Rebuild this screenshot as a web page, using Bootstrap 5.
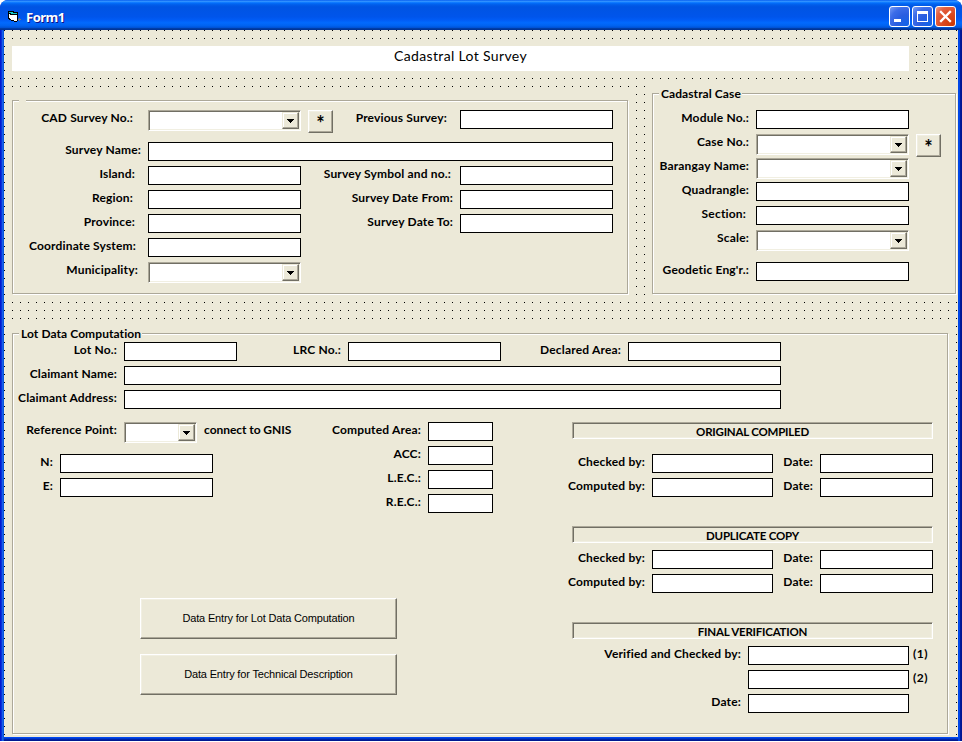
<!DOCTYPE html>
<html lang="en">
<head>
<meta charset="utf-8">
<title>Form1</title>
<link href="https://cdn.jsdelivr.net/npm/bootstrap@5.3.0/dist/css/bootstrap.min.css" rel="stylesheet">
<style>
:root{--face:#ece9d8;--shade:#aca899;--deep:#716f64;--lite:#f1efe2}
body{background:#fff;font:700 12px/16px Lato,sans-serif;color:#000;overflow:hidden}
.xp-window{width:962px;height:741px;border-radius:8px 8px 0 0;overflow:hidden;padding:0 4px 4px;
  background:linear-gradient(90deg,#0019cf 0,#0019cf 1px,#0831d9 1px,#0831d9 2px,#1660e8 2px,#1660e8 3px,#0855dd 3px,#0855dd 4px,transparent 4px,transparent 958px,#0046e6 958px,#0046e6 960px,#001da0 960px,#00138c 962px),
  linear-gradient(180deg,#0048f0 0,#0048f0 738px,#0041dc 738px,#0030c0 739px,#001890 740px)}
.xp-title{height:30px;margin:0 -4px;padding:0 6px 0 6px;
  background:linear-gradient(180deg,#0058ee 0,#3593ff 4%,#288eff 6%,#127dff 8%,#036ffc 10%,#0262ee 14%,#0057e5 20%,#0054e3 24%,#0055eb 56%,#005bf5 66%,#026afe 76%,#0062ef 86%,#0052d6 92%,#0040ab 94%,#003092 100%)}
.xp-caption{font:700 13px/16px "Noto Sans",sans-serif;letter-spacing:-.5px;color:#fff;text-shadow:1px 1px #0f1089;margin:3px 0 0 4px}
.xp-ico{margin:3px 0 0 1px}
.xp-btn{width:21px;height:21px;border:1px solid #fff;border-radius:3px;background:radial-gradient(circle at 85% 90%,#1463e8 0,#2a5de0 40%,#3c6ce8 70%,#7a9df5 100%)}
.xp-btn.xp-close{background:radial-gradient(circle at 90% 90%,#cc3a05 0,#da4a22 45%,#e46142 75%,#f0a08c 100%)}
.xp-btns{gap:2px;margin-top:2px}
.client{height:707px;padding:16px 0 0 8px;
  background:linear-gradient(90deg,#0000 1px,var(--face) 1px) 0 0/8px 8px,linear-gradient(#000 1px,var(--face) 1px) 0 0/8px 8px}
.banner{width:897px;height:25px;background:#fff;font:400 14px/20px Lato,sans-serif;letter-spacing:.35px;margin-bottom:15px}
.frame{position:relative;background:var(--face)}
.frame::before{content:"";position:absolute;inset:7px 1px 1px 0;border:1px solid var(--shade);box-shadow:inset 1px 1px #fff,1px 1px #fff}
.frame>*{position:relative}
.frame-a{width:617px;height:201px;margin-top:8px}
.frame-a::before{top:6px}
.frame-b{width:305px;height:209px;margin-left:23px}
.frame-c{width:937px;height:409px;margin-top:31px}
.cap{height:16px;margin-left:7px;padding:0 1px 0 2px;background:var(--face);width:max-content;min-width:7px;letter-spacing:.08px}
.tops{width:945px}
.ln{display:flex;height:24px;align-items:flex-start}
.ln.gap8{height:32px}
.lb{text-align:right;padding-right:7px;white-space:nowrap;flex:none;letter-spacing:.17px}
.r9{padding-right:9px}.r10{padding-right:10px}.r12{padding-right:12px}.r13{padding-right:13px}.r15{padding-right:15px}
.box{height:19px;min-height:0;padding:0 3px;border:1px solid #000;border-radius:0;background:#fff;font:inherit;flex:none}
.box:focus{box-shadow:none;border-color:#000}
.sunk{border:1px solid;border-color:var(--shade) #fff #fff var(--shade);box-shadow:inset 1px 1px var(--deep),inset -1px -1px var(--lite);flex:none}
.combo{height:21px;background:#fff;padding:1px;display:flex;justify-content:flex-end}
.raise{border:1px solid;border-color:#fff var(--deep) var(--deep) #fff;box-shadow:inset -1px -1px var(--shade),inset 1px 1px var(--lite);background:var(--face);border-radius:0;padding:0;color:#000}
.drop{width:17px;height:17px;border-color:var(--face) var(--deep) var(--deep) var(--face);box-shadow:inset -1px -1px var(--shade),inset 1px 1px #fff;display:block}
.drop svg{display:block;margin:6px 0 0 4px}
.star{width:25px;height:23px;margin-left:7px;font:700 20px/25px Lato,sans-serif;flex:none}
.cmd{display:block;width:257px;height:41px;padding-bottom:2px;font:400 11px/14px "Liberation Sans",sans-serif;letter-spacing:-.17px}
.cmds{margin:96px 0 0 128px}
.w153{width:153px}.w113{width:113px}.w465{width:465px}.w657{width:657px}.w73{width:73px}.w65{width:65px}.w121{width:121px}.w161{width:161px}
.l136{width:136px}.l159{width:159px}.l104{width:104px}.l112{width:112px}.l111{width:111px}.l127{width:127px}.l124{width:124px}.l100{width:100px}.l196{width:196px}.l48{width:48px}.l47{width:47px}
.l80{width:88px;text-align:left;padding:0 0 0 7px;letter-spacing:-.05px}
.colL{width:292px}.colM{width:248px}.colR{width:381px}
.bar{width:361px;height:17px;margin-left:20px;padding-top:1px;text-align:center;font-size:11.5px;letter-spacing:-.22px}
.bar2{margin-top:24px}
.num{margin-left:4px;letter-spacing:.5px}
.space15{margin-bottom:15px}.space7{margin-bottom:7px}
</style>
<script src="https://cdn.jsdelivr.net/npm/bootstrap@5.3.0/dist/js/bootstrap.bundle.min.js"></script>
</head>
<body>
<svg class="d-none"><symbol id="arr" viewBox="0 0 7 4"><path d="M0 0H7V1H6V2H5V3H4V4H3V3H2V2H1V1H0Z" shape-rendering="crispEdges"/></symbol></svg>
<main class="xp-window">
  <header class="xp-title d-flex align-items-center">
    <svg class="xp-ico" width="15" height="13" viewBox="0 0 15 13" shape-rendering="crispEdges"><path d="M1 1H7V2H11V11H10V12H7V11H4V10H2V9H1Z" fill="#000"/><path d="M2 2H6V3H10V4H4V3H2Z" fill="#1cc"/><path d="M2 4H3V8H2Z" fill="#fff"/><path d="M3 5H10V11H7V10H4V9H3Z" fill="#fff"/><path d="M12 8H13V9H14V10H13V11H12V10H11V9H12Z" fill="#777"/></svg>
    <div class="xp-caption">Form1</div>
    <div class="xp-btns d-flex ms-auto">
      <div class="xp-btn"><svg class="d-block" width="19" height="19"><path d="M4 12h7v3h-7z" fill="#fff"/></svg></div>
      <div class="xp-btn"><svg class="d-block" width="19" height="19"><path d="M4 4h11v11H4zM5 7v7h9V7z" fill="#fff" fill-rule="evenodd"/></svg></div>
      <div class="xp-btn xp-close"><svg class="d-block" width="19" height="19"><path d="M5 5l9 9M14 5l-9 9" stroke="#fff" stroke-width="2.3" stroke-linecap="square"/></svg></div>
    </div>
  </header>
  <div class="client">
    <div class="banner text-center">Cadastral Lot Survey</div>
    <div class="tops d-flex">
      <section class="frame frame-a">
        <div class="cap"></div>
        <div class="ln gap8"><label class="lb l136 r15">CAD Survey No.:</label><div class="sunk combo w153"><span class="raise drop"><svg width="7" height="4"><use href="#arr"/></svg></span></div><button class="btn raise star">*</button><label class="lb l127 r13">Previous Survey:</label><input class="form-control box w153"></div>
        <div class="ln"><label class="lb l136">Survey Name:</label><input class="form-control box w465"></div>
        <div class="ln"><label class="lb l136 r13">Island:</label><input class="form-control box w153"><label class="lb l159 r9">Survey Symbol and no.:</label><input class="form-control box w153"></div>
        <div class="ln"><label class="lb l136 r15">Region:</label><input class="form-control box w153"><label class="lb l159">Survey Date From:</label><input class="form-control box w153"></div>
        <div class="ln"><label class="lb l136 r13">Province:</label><input class="form-control box w153"><label class="lb l159">Survey Date To:</label><input class="form-control box w153"></div>
        <div class="ln"><label class="lb l136 r12">Coordinate System:</label><input class="form-control box w153"></div>
        <div class="ln"><label class="lb l136 r10">Municipality:</label><div class="sunk combo w153"><span class="raise drop"><svg width="7" height="4"><use href="#arr"/></svg></span></div></div>
      </section>
      <section class="frame frame-b">
        <div class="cap mb-2">Cadastral Case</div>
        <div class="ln"><label class="lb l104">Module No.:</label><input class="form-control box w153"></div>
        <div class="ln"><label class="lb l104">Case No.:</label><div class="sunk combo w153"><span class="raise drop"><svg width="7" height="4"><use href="#arr"/></svg></span></div><button class="btn raise star">*</button></div>
        <div class="ln"><label class="lb l104">Barangay Name:</label><div class="sunk combo w153"><span class="raise drop"><svg width="7" height="4"><use href="#arr"/></svg></span></div></div>
        <div class="ln"><label class="lb l104">Quadrangle:</label><input class="form-control box w153"></div>
        <div class="ln"><label class="lb l104 r10">Section:</label><input class="form-control box w153"></div>
        <div class="ln gap8"><label class="lb l104">Scale:</label><div class="sunk combo w153"><span class="raise drop"><svg width="7" height="4"><use href="#arr"/></svg></span></div></div>
        <div class="ln"><label class="lb l104">Geodetic Eng'r.:</label><input class="form-control box w153"></div>
      </section>
    </div>
    <section class="frame frame-c">
      <div class="cap">Lot Data Computation</div>
      <div class="ln"><label class="lb l112">Lot No.:</label><input class="form-control box w113"><label class="lb l111">LRC No.:</label><input class="form-control box w153"><label class="lb l127">Declared Area:</label><input class="form-control box w153"></div>
      <div class="ln"><label class="lb l112">Claimant Name:</label><input class="form-control box w657"></div>
      <div class="ln gap8"><label class="lb l112">Claimant Address:</label><input class="form-control box w657"></div>
      <div class="d-flex">
        <div class="colL">
          <div class="ln gap8"><label class="lb l112">Reference Point:</label><div class="sunk combo w73"><span class="raise drop"><svg width="7" height="4"><use href="#arr"/></svg></span></div><span class="lb l80">connect to GNIS</span></div>
          <div class="ln"><label class="lb l48">N:</label><input class="form-control box w153"></div>
          <div class="ln"><label class="lb l48">E:</label><input class="form-control box w153"></div>
          <div class="cmds">
            <button class="btn raise cmd space15">Data Entry for Lot Data Computation</button>
            <button class="btn raise cmd">Data Entry for Technical Description</button>
          </div>
        </div>
        <div class="colM">
          <div class="ln"><label class="lb l124">Computed Area:</label><input class="form-control box w65"></div>
          <div class="ln"><label class="lb l124">ACC:</label><input class="form-control box w65"></div>
          <div class="ln"><label class="lb l124">L.E.C.:</label><input class="form-control box w65"></div>
          <div class="ln"><label class="lb l124">R.E.C.:</label><input class="form-control box w65"></div>
        </div>
        <div class="colR">
          <div class="sunk bar space15">ORIGINAL COMPILED</div>
          <div class="ln"><label class="lb l100">Checked by:</label><input class="form-control box w121"><label class="lb l47">Date:</label><input class="form-control box w113"></div>
          <div class="ln"><label class="lb l100">Computed by:</label><input class="form-control box w121"><label class="lb l47">Date:</label><input class="form-control box w113"></div>
          <div class="sunk bar space7 bar2">DUPLICATE COPY</div>
          <div class="ln"><label class="lb l100">Checked by:</label><input class="form-control box w121"><label class="lb l47">Date:</label><input class="form-control box w113"></div>
          <div class="ln"><label class="lb l100">Computed by:</label><input class="form-control box w121"><label class="lb l47">Date:</label><input class="form-control box w113"></div>
          <div class="sunk bar space7 bar2">FINAL VERIFICATION</div>
          <div class="ln"><label class="lb l196">Verified and Checked by:</label><input class="form-control box w161"><span class="num">(1)</span></div>
          <div class="ln"><label class="lb l196"></label><input class="form-control box w161"><span class="num">(2)</span></div>
          <div class="ln"><label class="lb l196">Date:</label><input class="form-control box w161"></div>
        </div>
      </div>
    </section>
  </div>
</main>
</body>
</html>
